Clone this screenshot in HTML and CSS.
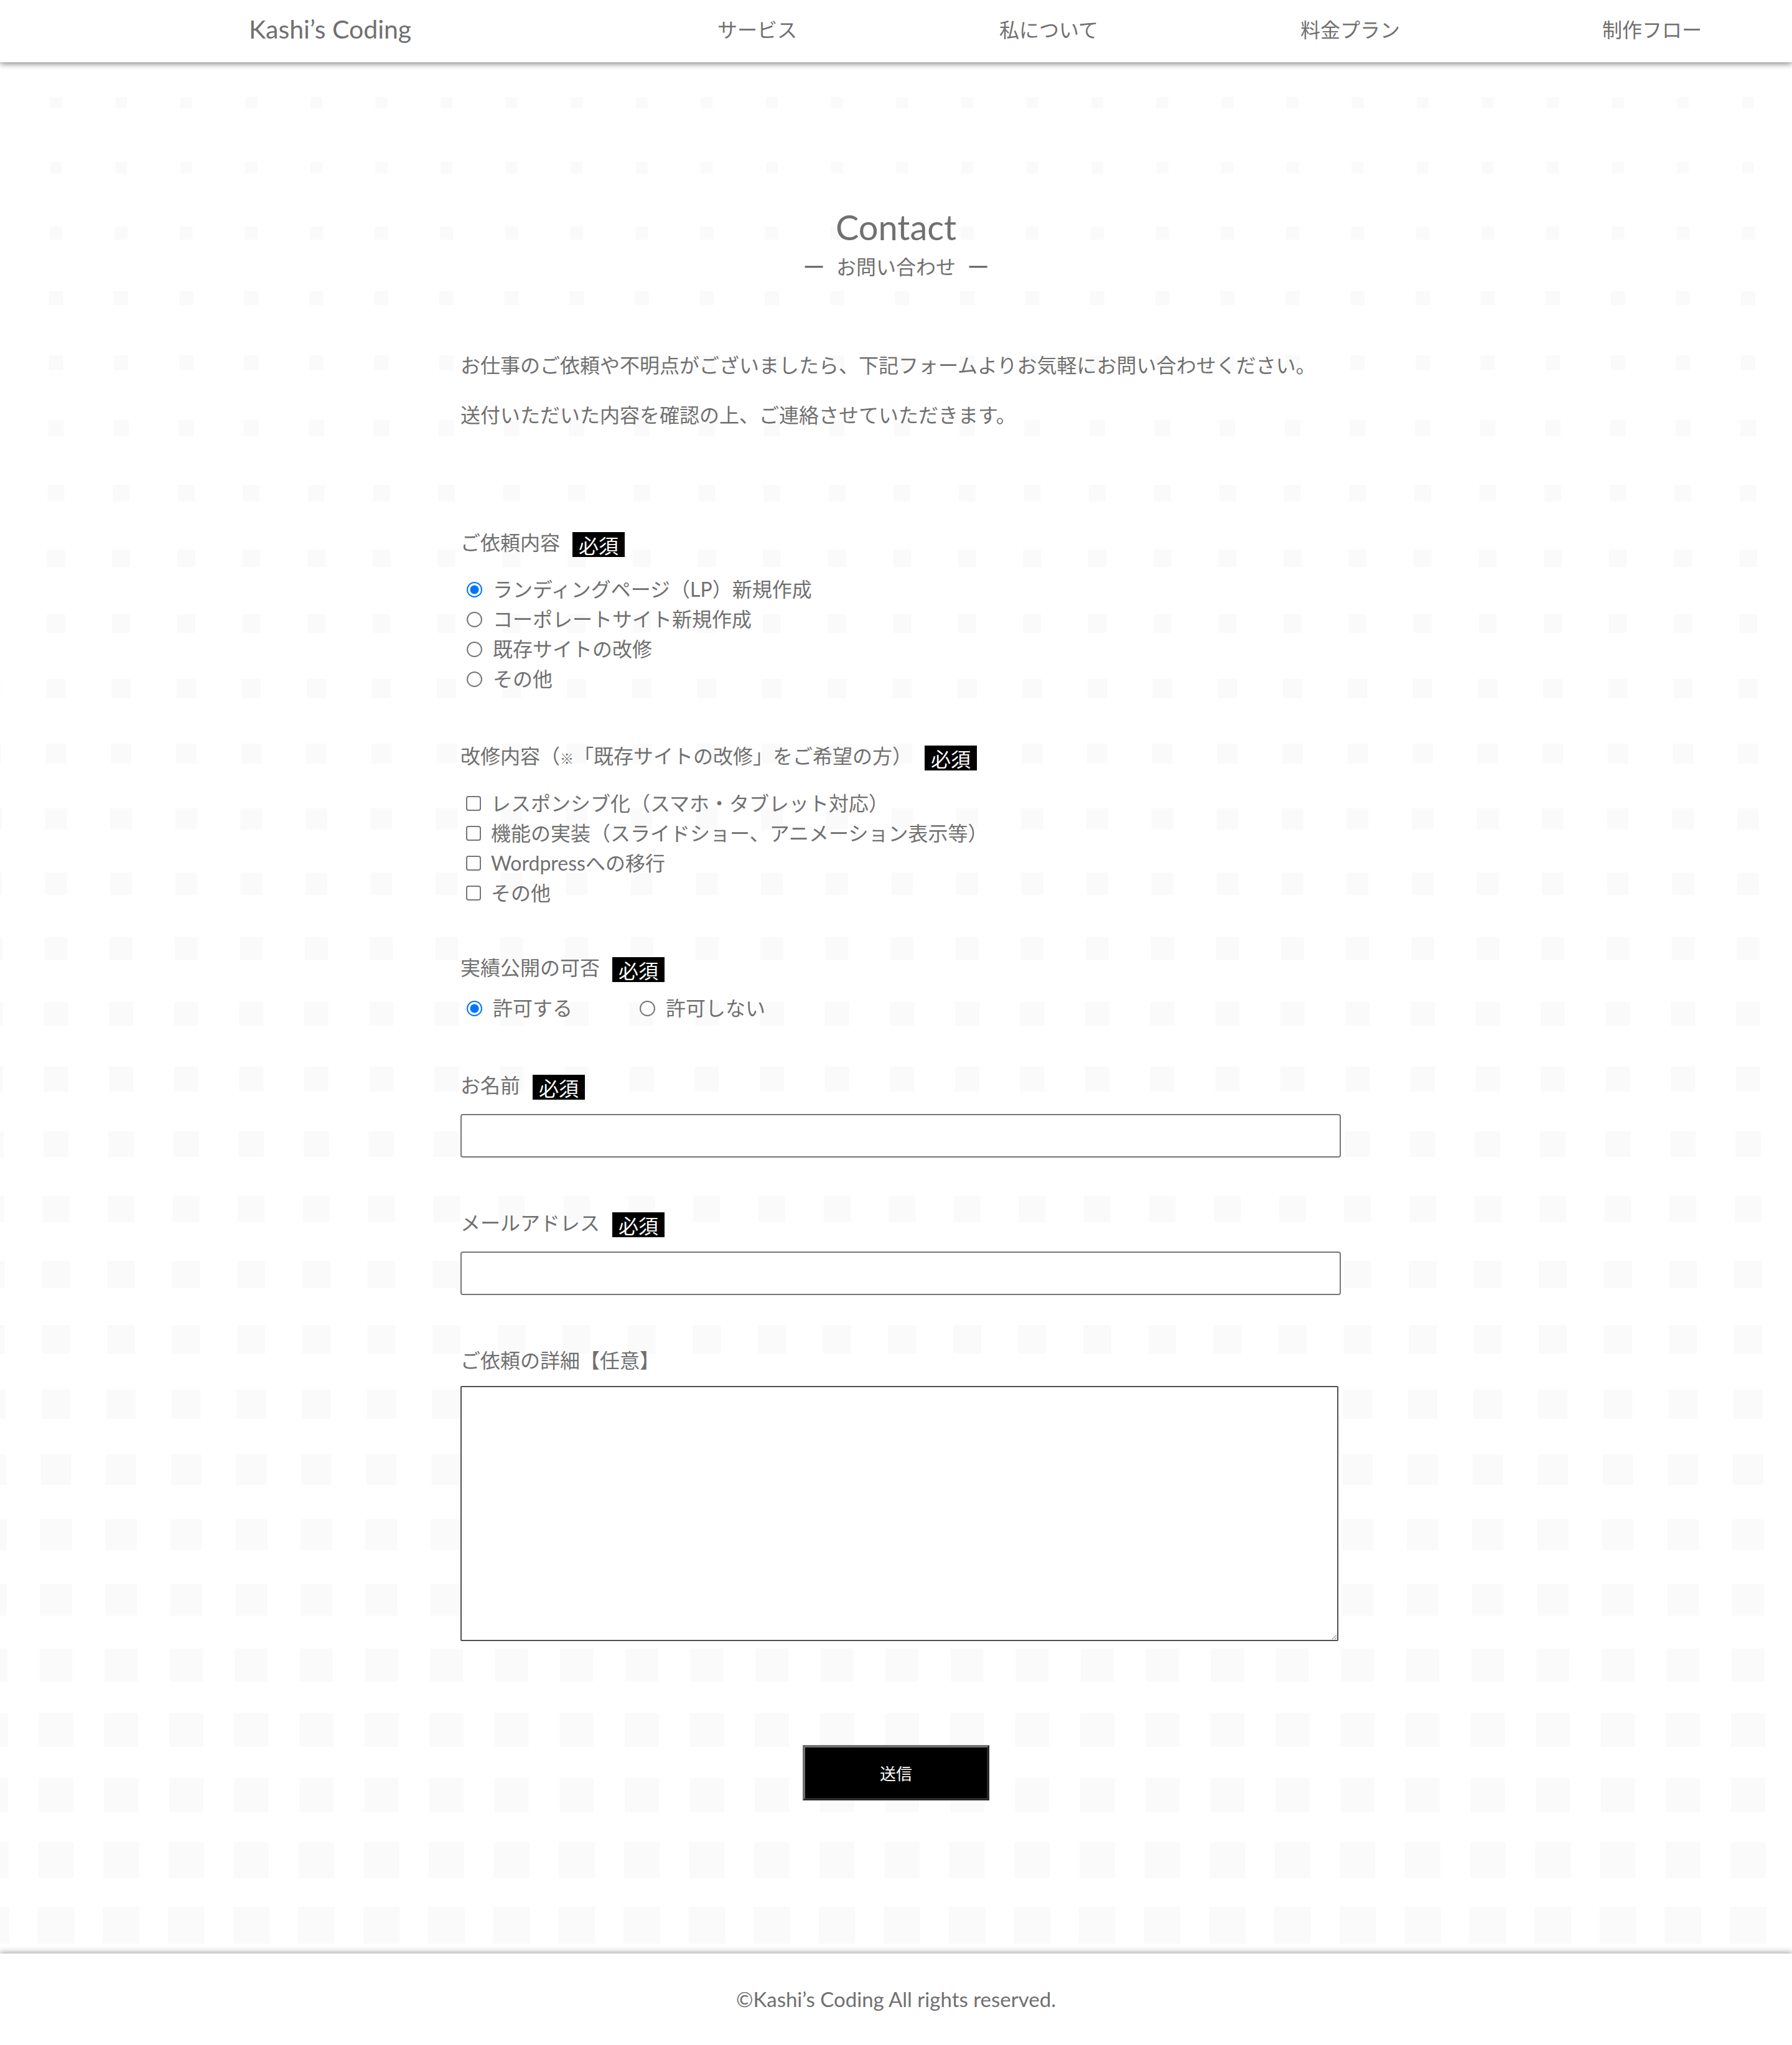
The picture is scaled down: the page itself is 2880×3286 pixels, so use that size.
FILE: index.html
```html
<!DOCTYPE html>
<html lang="ja">
<head>
<meta charset="utf-8">
<title>Contact | Kashi's Coding</title>
<link rel="stylesheet" href="styles.css">
</head>
<body>
<div class="bg-grid" aria-hidden="true">
  <div class="bg-row" style="--s:18px"></div>
  <div class="bg-row" style="--s:19.5px"></div>
  <div class="bg-row" style="--s:20.9px"></div>
  <div class="bg-row" style="--s:22.4px"></div>
  <div class="bg-row" style="--s:23.8px"></div>
  <div class="bg-row" style="--s:25.3px"></div>
  <div class="bg-row" style="--s:26.7px"></div>
  <div class="bg-row" style="--s:28.2px"></div>
  <div class="bg-row" style="--s:29.6px"></div>
  <div class="bg-row" style="--s:31.1px"></div>
  <div class="bg-row" style="--s:32.5px"></div>
  <div class="bg-row" style="--s:34px"></div>
  <div class="bg-row" style="--s:35.4px"></div>
  <div class="bg-row" style="--s:36.9px"></div>
  <div class="bg-row" style="--s:38.3px"></div>
  <div class="bg-row" style="--s:39.8px"></div>
  <div class="bg-row" style="--s:41.2px"></div>
  <div class="bg-row" style="--s:42.7px"></div>
  <div class="bg-row" style="--s:44.1px"></div>
  <div class="bg-row" style="--s:45.6px"></div>
  <div class="bg-row" style="--s:47px"></div>
  <div class="bg-row" style="--s:48.5px"></div>
  <div class="bg-row" style="--s:49.9px"></div>
  <div class="bg-row" style="--s:51.4px"></div>
  <div class="bg-row" style="--s:52.8px"></div>
  <div class="bg-row" style="--s:54.3px"></div>
  <div class="bg-row" style="--s:55.7px"></div>
  <div class="bg-row" style="--s:57.2px"></div>
  <div class="bg-row" style="--s:58.6px"></div>
</div>

<header class="site-header">
  <div class="logo">Kashi’s Coding</div>
  <nav>
    <ul class="nav-list">
      <li>サービス</li>
      <li>私について</li>
      <li>料金プラン</li>
      <li>制作フロー</li>
    </ul>
  </nav>
</header>

<main class="contact">
  <h1 class="title">Contact</h1>
  <p class="subtitle"><span class="dash">—</span>お問い合わせ<span class="dash">—</span></p>

  <div class="intro">
    <p>お仕事のご依頼や不明点がございましたら、下記フォームよりお気軽にお問い合わせください。</p>
    <p>送付いただいた内容を確認の上、ご連絡させていただきます。</p>
  </div>

  <form class="form">
    <div class="field field--choice">
      <div class="field-label">ご依頼内容<span class="badge">必須</span></div>
      <div class="options">
        <label class="opt"><input type="radio" name="kind" checked><span>ランディングページ（LP）新規作成</span></label>
        <label class="opt"><input type="radio" name="kind"><span>コーポレートサイト新規作成</span></label>
        <label class="opt"><input type="radio" name="kind"><span>既存サイトの改修</span></label>
        <label class="opt"><input type="radio" name="kind"><span>その他</span></label>
      </div>
    </div>

    <div class="field field--check">
      <div class="field-label">改修内容（<span class="kome">※</span>「既存サイトの改修」をご希望の方）<span class="badge">必須</span></div>
      <div class="options">
        <label class="opt opt--check"><input type="checkbox"><span>レスポンシブ化（スマホ・タブレット対応）</span></label>
        <label class="opt opt--check"><input type="checkbox"><span>機能の実装（スライドショー、アニメーション表示等）</span></label>
        <label class="opt opt--check"><input type="checkbox"><span>Wordpressへの移行</span></label>
        <label class="opt opt--check"><input type="checkbox"><span>その他</span></label>
      </div>
    </div>

    <div class="field field--inline">
      <div class="field-label">実績公開の可否<span class="badge">必須</span></div>
      <div class="options options--row">
        <label class="opt opt--inline"><input type="radio" name="pub" checked><span>許可する</span></label>
        <label class="opt"><input type="radio" name="pub"><span>許可しない</span></label>
      </div>
    </div>

    <div class="field field--text">
      <div class="field-label">お名前<span class="badge">必須</span></div>
      <input class="text-input" type="text">
    </div>

    <div class="field field--text">
      <div class="field-label">メールアドレス<span class="badge">必須</span></div>
      <input class="text-input" type="email">
    </div>

    <div class="field field--area">
      <div class="field-label">ご依頼の詳細【任意】</div>
      <textarea class="text-area"></textarea>
    </div>

    <div class="submit-row">
      <button class="submit" type="button">送信</button>
    </div>
  </form>
</main>

<footer class="site-footer">
  <p>©Kashi’s Coding All rights reserved.</p>
</footer>
</body>
</html>
```

FILE: styles.css
```css
* {
  box-sizing: border-box;
}

html, body {
  margin: 0;
  padding: 0;
}

body {
  position: relative;
  background: #ffffff;
  color: #707070;
  font-family: Lato, "Noto Sans CJK JP", sans-serif;
  font-size: 32px;
  line-height: 48px;
}

/* decorative background grid */
.bg-grid {
  position: absolute;
  top: 112.7px;
  left: 0;
  right: 0;
  z-index: 0;
  display: flex;
  flex-direction: column;
  pointer-events: none;
}

.bg-row {
  height: 104.6px;
  display: flex;
  align-items: center;
}

.bg-row::before {
  content: "";
  display: block;
  width: 100%;
  height: var(--s);
  background-image: linear-gradient(90deg,
    transparent calc(52.3px - var(--s) / 2),
    #fafafa calc(52.3px - var(--s) / 2),
    #fafafa calc(52.3px + var(--s) / 2),
    transparent calc(52.3px + var(--s) / 2));
  background-size: 104.6px 100%;
  background-position: 37.7px 0;
  background-repeat: repeat-x;
}

/* header */
.site-header {
  position: relative;
  z-index: 3;
  height: 100px;
  background: #ffffff;
  display: flex;
  align-items: center;
  justify-content: space-between;
  padding: 0 145px 8px 400px;
  box-shadow: 0 3px 9px rgba(0, 0, 0, 0.45);
}

.logo {
  font-family: Lato, sans-serif;
  font-size: 41px;
  line-height: 1;
  color: #707070;
}

.nav-list {
  list-style: none;
  margin: 0;
  padding: 0;
  display: flex;
  gap: 325px;
  font-family: "Noto Sans CJK JP", sans-serif;
  font-size: 32px;
  line-height: 48px;
}

/* main */
.contact {
  position: relative;
  z-index: 1;
  width: 1400px;
  margin: 0 auto;
  padding: 232px 0 246px;
}

.title {
  margin: 0;
  text-align: center;
  font-family: Lato, sans-serif;
  font-weight: 400;
  font-size: 56px;
  line-height: 65px;
  color: #707070;
}

.subtitle {
  margin: 6px 0 0;
  text-align: center;
  font-family: "Noto Sans CJK JP", sans-serif;
  font-size: 32px;
  line-height: 48px;
}

.dash {
  margin: 0 20px;
  color: #666666;
  -webkit-text-stroke: 1.6px #666666;
}

.intro {
  margin-top: 112px;
}

.intro p {
  margin: 0 0 32px;
}

.intro p:last-child {
  margin-bottom: 0;
}

/* form */
.form {
  margin-top: 157px;
}

.field {
  margin-top: 76px;
}

.field:first-child {
  margin-top: 0;
}

.field--inline {
  margin-top: 72px;
}

.field--text + .field {
  margin-top: 81px;
}

.field-label {
  line-height: 48px;
}

.kome {
  font-size: 22px;
}

.badge {
  position: relative;
  top: 5px;
  display: inline-block;
  margin-left: 20px;
  padding: 0 10px;
  background: #000000;
  color: #ffffff;
  font-family: "Noto Sans CJK JP", sans-serif;
  font-size: 32px;
  line-height: 40px;
}

.field--choice .options {
  margin-top: 27px;
}

.field--check .options {
  margin-top: 24px;
}

.field--inline .options {
  margin-top: 17px;
}

.field--text .text-input {
  margin-top: 22px;
}

.field--area .text-area {
  margin-top: 17px;
}

.options--row {
  display: flex;
}

.opt {
  display: flex;
  align-items: center;
  height: 48px;
}

.opt input[type="radio"] {
  appearance: none;
  -webkit-appearance: none;
  width: 25px;
  height: 25px;
  margin: 0 17px 0 10px;
  flex: none;
  border: 2px solid #767676;
  border-radius: 50%;
  background: #ffffff;
}

.opt input[type="radio"]:checked {
  border: 2.5px solid #0075ff;
  background: radial-gradient(circle, #0075ff 0 6.5px, #ffffff 7.5px);
}

.opt--check input[type="checkbox"] {
  appearance: none;
  -webkit-appearance: none;
  width: 24px;
  height: 24px;
  margin: 0 16px 0 9px;
  flex: none;
  border: 2px solid #767676;
  border-radius: 4px;
  background: #ffffff;
}

.opt--inline {
  margin-right: 98px;
}

.text-input {
  display: block;
  width: 1415px;
  height: 70px;
  border: 2px solid #767676;
  border-radius: 4px;
  background: #ffffff;
  font-size: 32px;
  padding: 2px 4px;
}

.text-area {
  display: block;
  width: 1411px;
  height: 410px;
  border: 2px solid #505050;
  border-radius: 2px;
  background: #ffffff;
  font-size: 26px;
  padding: 4px;
  resize: both;
}

.submit-row {
  display: flex;
  justify-content: center;
  margin-top: 167px;
}

.submit {
  width: 300px;
  height: 89px;
  background: #000000;
  color: #ffffff;
  font-family: "Noto Sans CJK JP", sans-serif;
  font-size: 26px;
  border-style: solid;
  border-width: 4px;
  border-color: #707070 #2a2a2a #2a2a2a #707070;
  padding: 0;
}

/* footer */
.site-footer {
  position: relative;
  z-index: 2;
  height: 150px;
  background: #ffffff;
  display: flex;
  align-items: center;
  justify-content: center;
  padding-bottom: 4px;
  box-shadow: 0 -3px 8px rgba(0, 0, 0, 0.3);
}

.site-footer p {
  margin: 0;
  font-family: Lato, sans-serif;
  font-size: 33px;
  line-height: 48px;
  color: #707070;
}
```
